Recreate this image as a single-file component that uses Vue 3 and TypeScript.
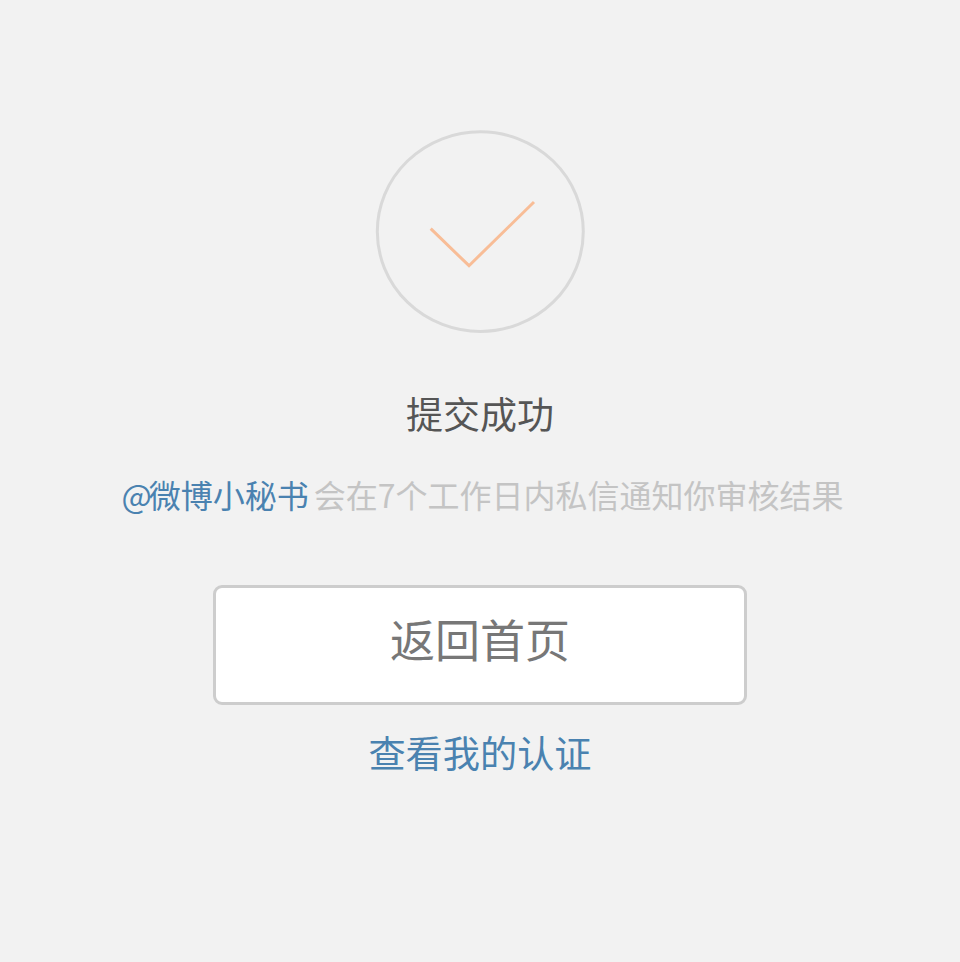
<script setup lang="ts">
const title = "提交成功";
const account = "微博小秘书";
const note = "会在7个工作日内私信通知你审核结果";
</script>

<template>
  <div class="page">
    <svg class="mark" width="210" height="204" viewBox="0 0 210 204">
      <ellipse cx="105.3" cy="101.6" rx="103" ry="99.8" fill="none" stroke="#d9d9d9" stroke-width="3" />
      <path d="M55.7 98.7 L94 135.7 L159 72" fill="none" stroke="#f8bd97" stroke-width="3" />
    </svg>
    <div class="title">{{ title }}</div>
    <div class="note"><span class="account"><span class="at">@</span>{{ account }}</span> {{ note }}</div>
    <button class="home">返回首页</button>
    <a class="link">查看我的认证</a>
  </div>
</template>

<style scoped>
.page {
  height: 962px;
  box-sizing: border-box;
  padding-top: 130px;
  display: flex;
  flex-direction: column;
  align-items: center;
  background: #f2f2f2;
  font-family: "Noto Sans CJK SC", "Noto Sans", sans-serif;
}
.mark { display: block; }
.title { margin-top: 53px; font-size: 37px; line-height: 52px; color: #555; }
.note { margin-top: 32px; padding-left: 5px; font-size: 32px; line-height: 46px; color: #c4c4c4; white-space: nowrap; }
.account { color: #4a82b0; margin-right: -2px; }
.at { letter-spacing: -3px; }
.home {
  margin-top: 68px;
  width: 534px;
  height: 120px;
  box-sizing: border-box;
  background: #fff;
  border: 3px solid #cdcdcd;
  border-radius: 9px;
  font: inherit;
  font-size: 45px;
  color: #777;
  padding: 0 0 13px;
}
.link { margin-top: 21px; font-size: 37.2px; line-height: 52px; color: #4a82b0; }
</style>
